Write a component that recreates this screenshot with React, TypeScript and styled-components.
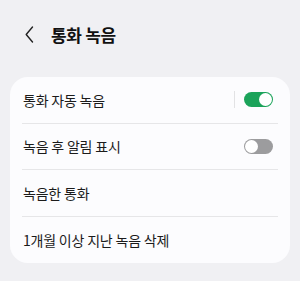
import React, { useState } from "react";
import styled, { createGlobalStyle } from "styled-components";

const GlobalStyle = createGlobalStyle`
  html, body {
    margin: 0;
    padding: 0;
    background: #f0f0f3;
  }
  body {
    font-family: "Noto Sans CJK KR", "Noto Sans", sans-serif;
    color: #1b1b1b;
  }
`;

const Page = styled.div`
  width: 300px;
  height: 281px;
  box-sizing: border-box;
  padding: 21px 10px 0;
`;

const Header = styled.div`
  display: flex;
  align-items: center;
  height: 26px;
  padding-left: 14px;
  gap: 17px;
`;

const BackButton = styled.button`
  display: flex;
  align-items: center;
  justify-content: center;
  width: 10px;
  height: 20px;
  padding: 0;
  border: none;
  background: none;
`;

const Title = styled.h1`
  margin: 0;
  font-size: 17px;
  font-weight: 700;
  letter-spacing: -0.3px;
  color: #111;
`;

const Card = styled.div`
  margin-top: 30px;
  background: #fcfcfe;
  border-radius: 18px;
  padding: 0 12px;
`;

const Row = styled.div<{ $last?: boolean }>`
  display: flex;
  align-items: center;
  height: 46.5px;
  box-sizing: border-box;
  padding: 0 1px;
  border-bottom: ${(p) => (p.$last ? "none" : "1px solid #e6e6e8")};
  font-size: 14px;
  letter-spacing: -0.2px;
`;

const Label = styled.div`
  flex: 1;
`;

const Separator = styled.div`
  width: 1px;
  height: 17px;
  background: #e2e2e4;
  margin-right: 9px;
`;

const Track = styled.button<{ $on: boolean }>`
  position: relative;
  width: 29px;
  height: 15px;
  padding: 0;
  margin-right: 4px;
  border-radius: 8px;
  border: none;
  background: ${(p) => (p.$on ? "#1ba35a" : "#9c9c9e")};
  cursor: pointer;
`;

const Knob = styled.span<{ $on: boolean }>`
  position: absolute;
  top: 1px;
  left: ${(p) => (p.$on ? "15px" : "1px")};
  width: 13px;
  height: 13px;
  border-radius: 50%;
  background: #fff;
`;

const Toggle = ({ on, onClick }: { on: boolean; onClick: () => void }) => (
  <Track $on={on} onClick={onClick}>
    <Knob $on={on} />
  </Track>
);

const App = () => {
  const [autoRecord, setAutoRecord] = useState(true);
  const [notify, setNotify] = useState(false);

  return (
    <>
      <GlobalStyle />
      <Page>
        <Header>
          <BackButton>
            <svg width="9" height="17" viewBox="0 0 9 17" fill="none">
              <path
                d="M7.5 1 L1.2 8.5 L7.5 16"
                stroke="#222"
                strokeWidth="1.4"
                strokeLinecap="round"
                strokeLinejoin="round"
              />
            </svg>
          </BackButton>
          <Title>통화 녹음</Title>
        </Header>
        <Card>
          <Row>
            <Label>통화 자동 녹음</Label>
            <Separator />
            <Toggle on={autoRecord} onClick={() => setAutoRecord(!autoRecord)} />
          </Row>
          <Row>
            <Label>녹음 후 알림 표시</Label>
            <Toggle on={notify} onClick={() => setNotify(!notify)} />
          </Row>
          <Row>
            <Label>녹음한 통화</Label>
          </Row>
          <Row $last>
            <Label>1개월 이상 지난 녹음 삭제</Label>
          </Row>
        </Card>
      </Page>
    </>
  );
};

export default App;
